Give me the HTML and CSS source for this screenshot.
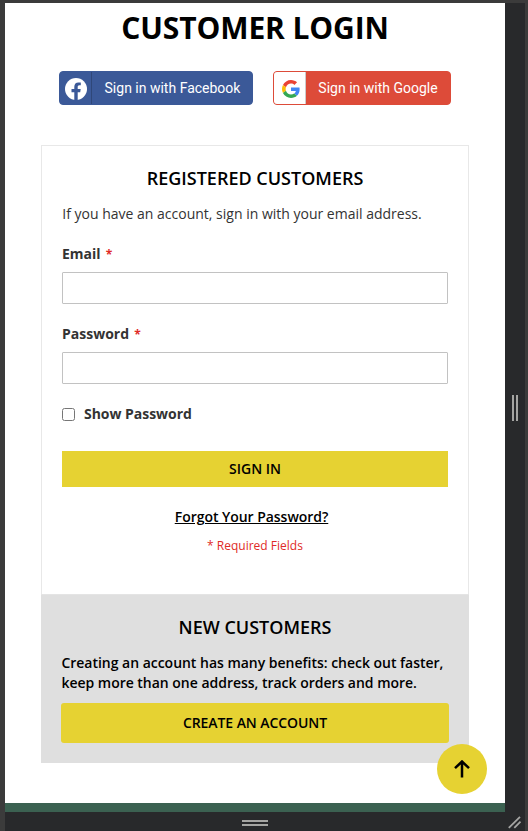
FILE: index.html
```html
<!DOCTYPE html>
<html lang="en">
<head>
<meta charset="utf-8">
<title>Customer Login</title>
<link rel="stylesheet" href="styles.css">
</head>
<body>
<div class="device">
  <main class="page">
    <h1 class="page-title">CUSTOMER LOGIN</h1>
    <div class="social">
      <a class="social-btn facebook">
        <span class="social-icon">
          <svg width="22" height="22" viewBox="0 0 22 22"><circle cx="11" cy="11" r="11" fill="#fff"/><path fill="#3b5998" d="M9.3 22v-7.7H6.5v-3.2h2.8V8.7c0-2.8 1.6-4.3 4.1-4.3 1.2 0 2.4.2 2.4.2v2.7h-1.4c-1.3 0-1.7.8-1.7 1.7v2.1h3l-.5 3.2h-2.5V22z"/></svg>
        </span>
        <span class="social-text">Sign in with Facebook</span>
      </a>
      <a class="social-btn google">
        <span class="social-icon">
          <svg width="18" height="18" viewBox="0 0 48 48"><path fill="#ea4335" d="M24 9.5c3.54 0 6.71 1.22 9.21 3.6l6.85-6.85C35.9 2.38 30.47 0 24 0 14.62 0 6.51 5.38 2.56 13.22l7.98 6.19C12.43 13.72 17.74 9.5 24 9.5z"/><path fill="#4285f4" d="M46.98 24.55c0-1.57-.15-3.09-.38-4.55H24v9.02h12.94c-.58 2.96-2.26 5.48-4.78 7.18l7.73 6c4.51-4.18 7.09-10.36 7.09-17.65z"/><path fill="#fbbc05" d="M10.53 28.59c-.48-1.45-.76-2.99-.76-4.59s.27-3.14.76-4.59l-7.98-6.19C.92 16.46 0 20.12 0 24c0 3.88.92 7.54 2.56 10.78l7.97-6.19z"/><path fill="#34a853" d="M24 48c6.48 0 11.93-2.13 15.89-5.81l-7.73-6c-2.15 1.45-4.92 2.3-8.16 2.3-6.26 0-11.57-4.22-13.47-9.91l-7.98 6.19C6.51 42.62 14.62 48 24 48z"/></svg>
        </span>
        <span class="social-text">Sign in with Google</span>
      </a>
    </div>
    <section class="card">
      <h2 class="block-title">REGISTERED CUSTOMERS</h2>
      <p class="note">If you have an account, sign in with your email address.</p>
      <label class="label" for="email">Email <span class="star">*</span></label>
      <input class="field" id="email" type="email">
      <label class="label" for="pass">Password <span class="star">*</span></label>
      <input class="field" id="pass" type="password">
      <label class="show"><input class="check" type="checkbox">Show Password</label>
      <button class="btn sign-in" type="button">SIGN IN</button>
      <div class="forgot"><a class="forgot-link">Forgot Your Password?</a></div>
      <p class="required">* Required Fields</p>
    </section>
    <section class="new-card">
      <h2 class="block-title">NEW CUSTOMERS</h2>
      <p class="benefits">Creating an account has many benefits: check out faster, keep more than one address, track orders and more.</p>
      <button class="btn create" type="button">CREATE AN ACCOUNT</button>
    </section>
    <footer class="footer"></footer>
    <a class="to-top" aria-label="Back to top">
      <svg width="16" height="18" viewBox="0 0 16 18" fill="none" stroke="#000" stroke-width="2.5"><path d="M8 17.5V2M1 8.2 8 1.5l7 6.7"/></svg>
    </a>
  </main>
  <div class="rail-right"><span class="grip-v"></span></div>
  <div class="rail-bottom"><span class="grip-h"></span></div>
  <div class="corner"><svg width="14" height="13" viewBox="0 0 14 13" stroke="#a5a5a3" stroke-width="1.8"><path d="M.8 11.8 12 .8M6.3 11.8 12.5 5.6"/></svg></div>
</div>
</body>
</html>
```
FILE: styles.css
```css
* { box-sizing: border-box; }
body {
  margin: 0;
  background: #3b3b3b;
  font-family: "Open Sans", sans-serif;
  font-size: 14px;
  line-height: 20px;
  color: #333;
}
h1, h2, p { margin: 0; }
.device {
  display: grid;
  grid-template-columns: 500px 20px;
  grid-template-rows: 809px 19px;
  width: 528px;
  height: 831px;
  padding: 3px 3px 0 5px;
  overflow: hidden;
}
.page {
  position: relative;
  display: flex;
  flex-direction: column;
  padding: 0 36px;
  background: #fff;
}
.page-title {
  margin-top: 5px;
  height: 40px;
  line-height: 40px;
  font-size: 30px;
  font-weight: 700;
  letter-spacing: -.1px;
  color: #000;
  text-align: center;
}
.social {
  display: flex;
  justify-content: center;
  gap: 20px;
  margin-top: 23px;
}
.social-btn {
  display: flex;
  height: 34px;
  border-radius: 4px;
  color: #fff;
  font: 14px/32px Roboto, sans-serif;
}
.facebook { width: 194px; background: #3b5998; border: 1px solid #3b5998; }
.google { width: 178px; background: #dd4b39; border: 1px solid #dd4b39; }
.social-icon {
  display: flex;
  align-items: center;
  justify-content: center;
  flex: none;
  width: 32px;
  border-right: 1px solid rgba(0, 0, 0, .2);
}
.facebook .social-icon { padding: 2px 0 0 1px; }
.google .social-icon { padding: 2px 0 0 3px; background: #fff; border-radius: 3px 0 0 3px; }
.social-text { flex: 1; text-align: center; white-space: nowrap; }
.facebook .social-text { padding-left: 1px; }
.card {
  height: 449px;
  margin-top: 40px;
  padding: 20px;
  border: 1px solid #e8e8e8;
  border-bottom: 0;
}
.block-title {
  height: 26px;
  line-height: 24px;
  font-size: 18px;
  font-weight: 600;
  color: #000;
  text-align: center;
}
.note { margin-top: 12px; padding-left: .3px; }
.label { display: block; height: 20px; margin-top: 20px; font-weight: 700; }
.star { margin-left: 1.5px; color: #e02b27; font-size: 12px; line-height: 1; }
.field {
  display: block;
  width: 100%;
  height: 32px;
  margin: 8px 0 0;
  border: 1px solid #c2c2c2;
  border-radius: 1px;
  background: #fff;
}
.show { display: flex; align-items: center; margin-top: 20px; font-weight: 700; letter-spacing: -.03px; }
.check { width: 13px; height: 13px; margin: 1px 9px 0 0; }
.btn {
  display: block;
  width: 100%;
  padding: 0;
  border: 0;
  background: #e6d232;
  color: #000;
  font: 600 14px/20px "Open Sans", sans-serif;
}
.sign-in { height: 36px; margin-top: 27px; }
.forgot { margin-top: 20px; padding-right: 7px; text-align: center; }
.forgot-link { color: #000; font-weight: 600; letter-spacing: -.04px; text-decoration: underline; }
.required { margin-top: 10px; color: #e02b27; font-size: 12px; line-height: 18px; text-align: center; }
.new-card {
  height: 169px;
  padding: 20px;
  border-top: 1px solid #e4e4e4;
  background: #dfdfdf;
}
.benefits { margin-top: 12px; padding-left: .4px; color: #000; font-weight: 600; letter-spacing: -.02px; }
.create { height: 40px; margin-top: 10px; border-radius: 3px; letter-spacing: -.08px; }
.footer { height: 9px; margin: auto -36px 0; background: #3b6151; }
.to-top {
  position: absolute;
  right: 18px;
  bottom: 18px;
  display: flex;
  align-items: center;
  justify-content: center;
  width: 50px;
  height: 50px;
  padding-bottom: 1px;
  border-radius: 50%;
  background: #e6d232;
}
.rail-right, .rail-bottom, .corner {
  display: flex;
  align-items: center;
  justify-content: center;
  background: #28292b;
}
.grip-v { width: 6px; height: 26px; border: solid #a5a5a3; border-width: 0 2px; }
.grip-h { width: 26px; height: 6px; margin-top: 3px; border: solid #a5a5a3; border-width: 2px 0; }
.corner { padding-top: 2px; }
```
